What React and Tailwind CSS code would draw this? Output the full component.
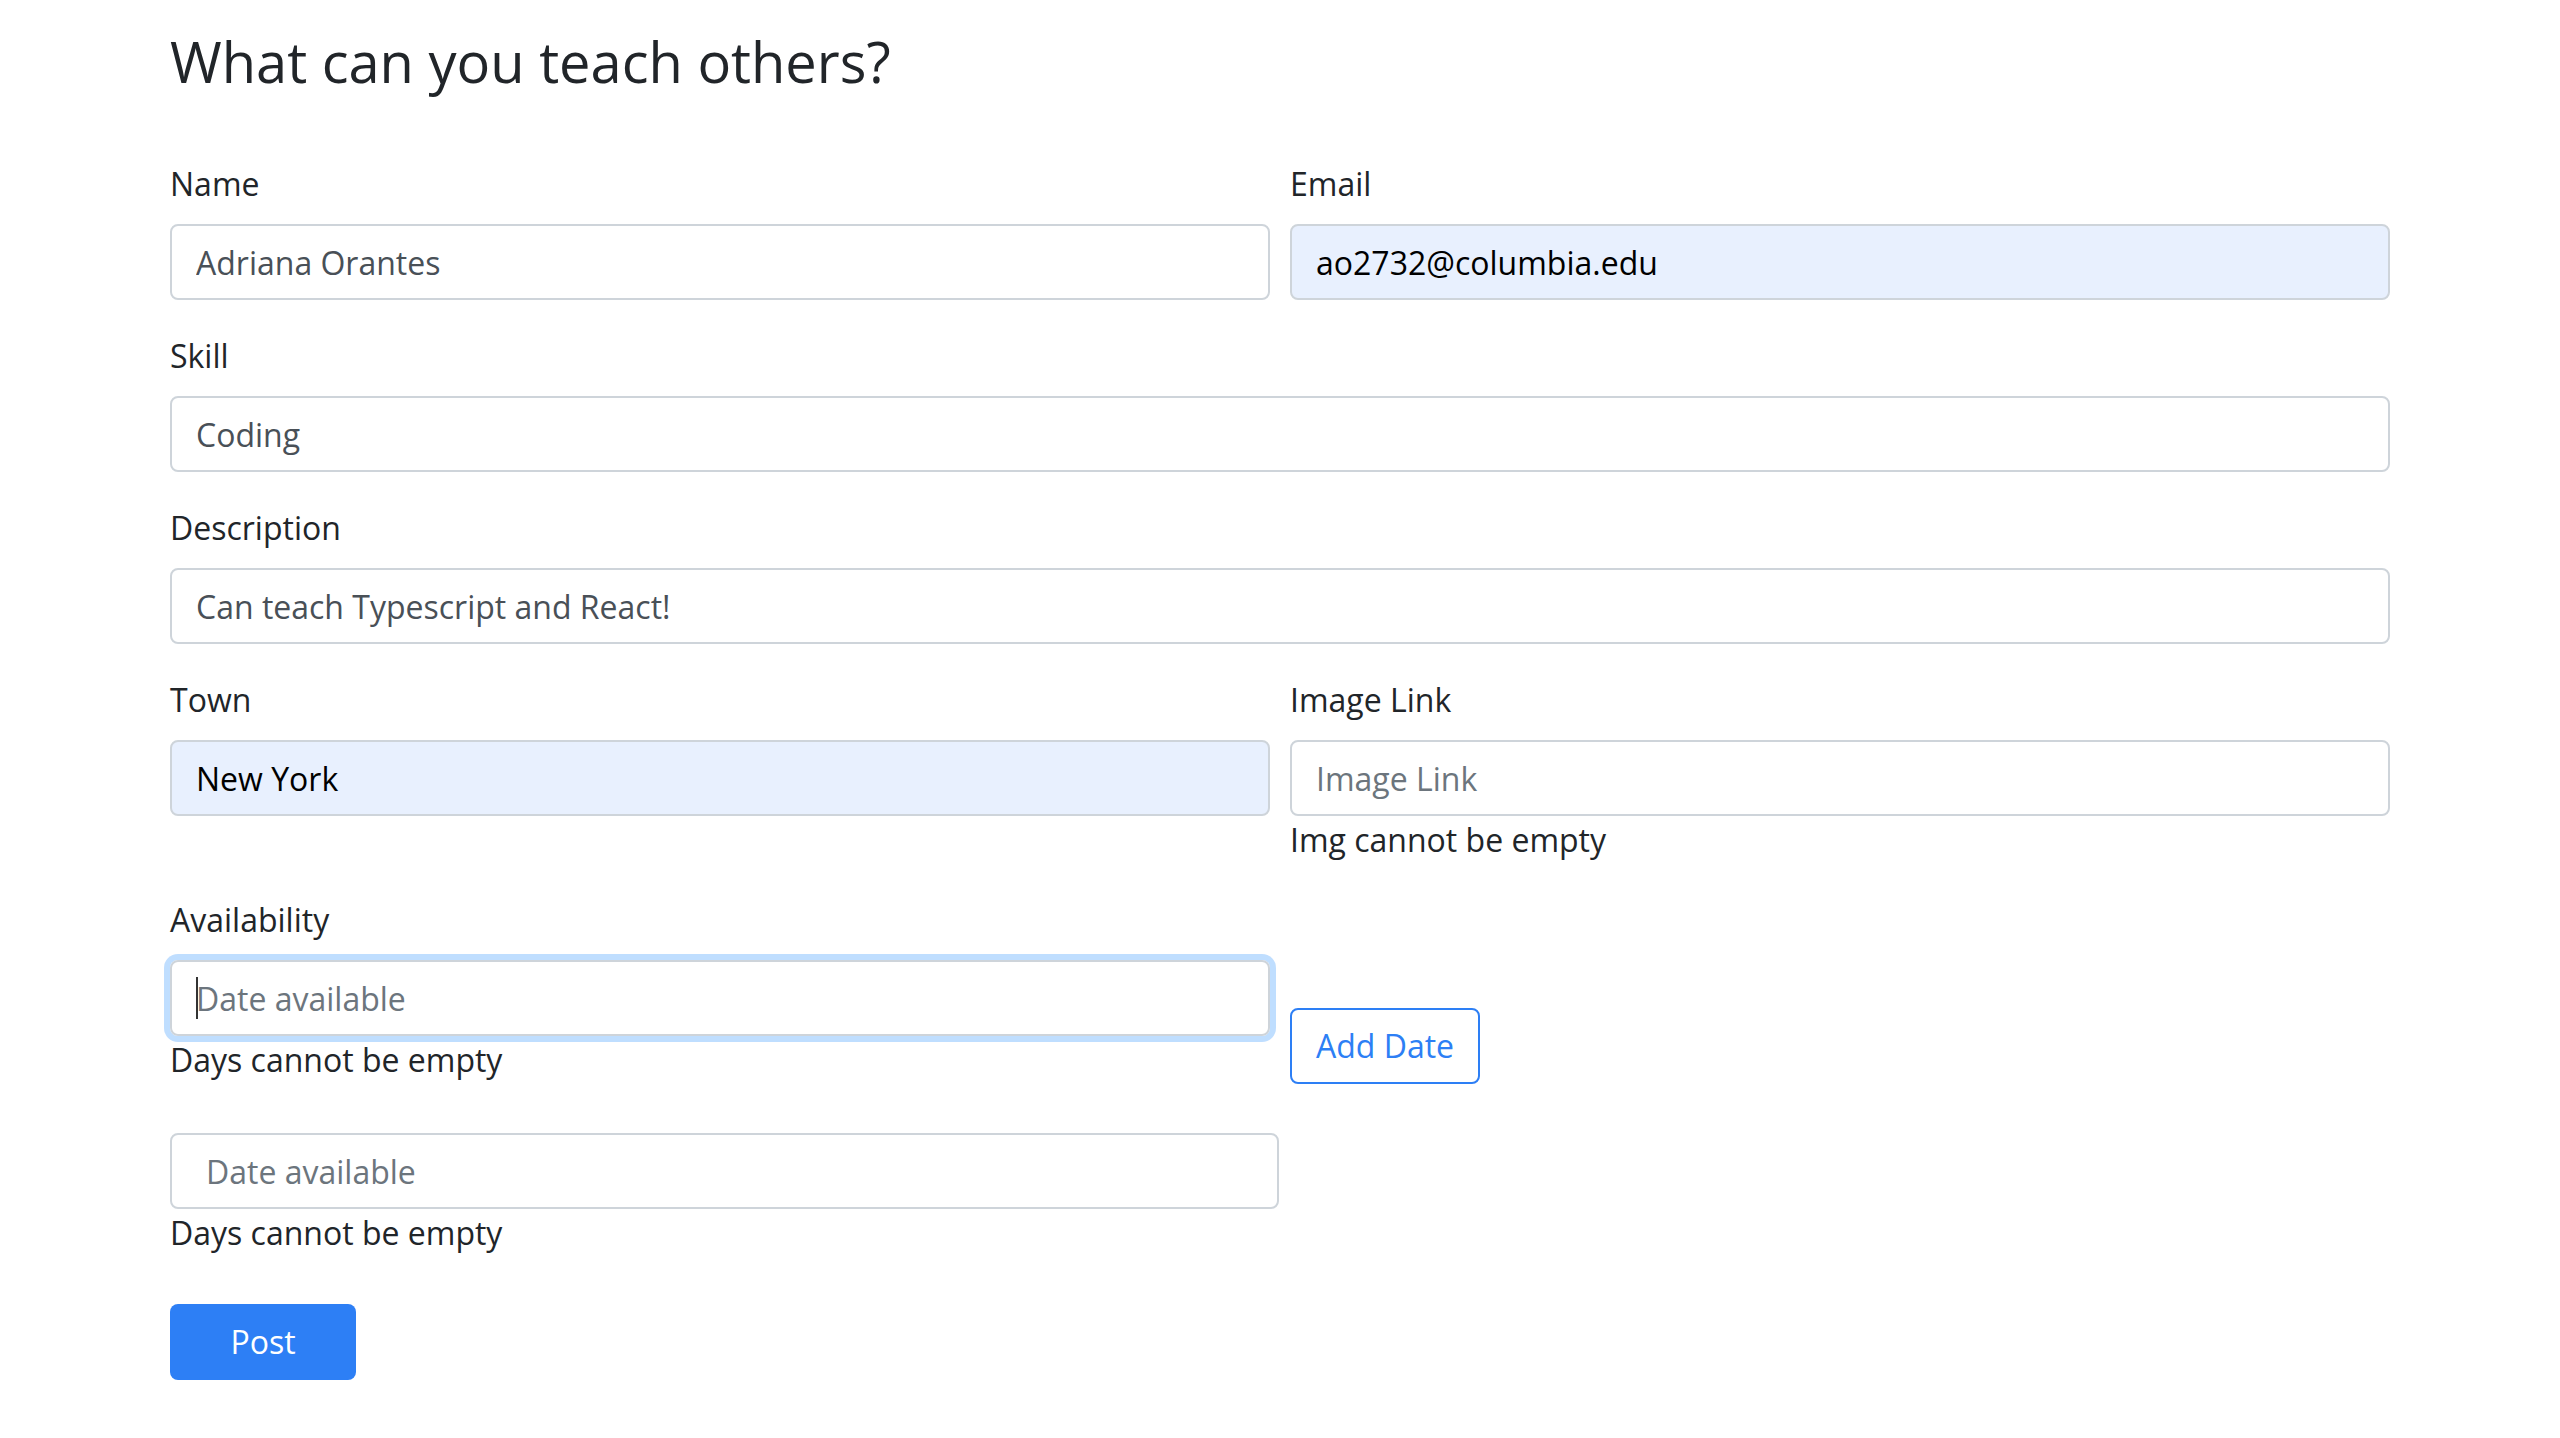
import { useState } from 'react'

const inputBase =
  'block w-full h-[76px] px-[24px] py-[12px] text-[32px] leading-[48px] rounded-[8px] border-2 border-[#ced4da] outline-none placeholder:text-[#6c757d]'

const Field = ({ label, value, placeholder, autofill, error }) => (
  <div className="mb-[32px]">
    <label className="block text-[32px] leading-[48px] mb-[16px] text-[#212529]">{label}</label>
    <input
      readOnly
      value={value}
      placeholder={placeholder}
      className={`${inputBase} ${autofill ? 'bg-[#e8f0fe] text-black' : 'bg-white text-[#495057]'}`}
    />
    {error && <div className="text-[32px] leading-[48px] text-[#212529]">{error}</div>}
  </div>
)

const App = () => {
  const [dates] = useState([''])

  return (
    <div className="min-h-screen bg-white font-['Open_Sans',sans-serif] text-[#212529]">
      <div className="w-[2220px] mx-auto pt-[28px]">
        <h3 className="text-[56px] leading-[1.2] font-normal mb-[65px]">What can you teach others?</h3>

        <form onSubmit={(e) => e.preventDefault()}>
          <div className="grid grid-cols-2 gap-x-[20px]">
            <Field label="Name" value="Adriana Orantes" />
            <Field label="Email" value="ao2732@columbia.edu" autofill />
          </div>

          <Field label="Skill" value="Coding" />
          <Field label="Description" value="Can teach Typescript and React!" />

          <div className="grid grid-cols-2 gap-x-[20px]">
            <Field label="Town" value="New York" autofill />
            <Field label="Image Link" value="" placeholder="Image Link" error="Img cannot be empty" />
          </div>

          <div className="grid grid-cols-2 gap-x-[20px]">
            <div>
              <label className="block text-[32px] leading-[48px] mb-[16px]">Availability</label>
              <div className="relative rounded-[8px] shadow-[0_0_0_6px_rgba(0,123,255,0.25)]">
                <input
                  readOnly
                  value=""
                  placeholder="Date available"
                  className={`${inputBase} bg-white text-[#495057] border-[#80bdff]`}
                />
                <div className="absolute left-[26px] top-[17px] w-[2px] h-[42px] bg-[#333]" />
              </div>
              <div className="text-[32px] leading-[48px]">Days cannot be empty</div>
            </div>
            <div className="flex items-end">
              <button
                type="button"
                className="h-[76px] px-[24px] text-[32px] leading-[48px] rounded-[8px] border-2 border-[#2d7ff5] text-[#2d7ff5] bg-white"
              >
                Add Date
              </button>
            </div>
          </div>

          {dates.map((d, i) => (
            <div key={i} className="mt-[49px] w-[1109px]">
              <input
                readOnly
                value={d}
                placeholder="Date available"
                className={`${inputBase} pl-[34px] bg-white text-[#495057]`}
              />
              <div className="text-[32px] leading-[48px]">Days cannot be empty</div>
            </div>
          ))}

          <button
            type="submit"
            className="mt-[47px] w-[186px] h-[76px] text-[32px] leading-[48px] rounded-[8px] bg-[#2d7ff5] text-white"
          >
            Post
          </button>
        </form>
      </div>
    </div>
  )
}

export default App
